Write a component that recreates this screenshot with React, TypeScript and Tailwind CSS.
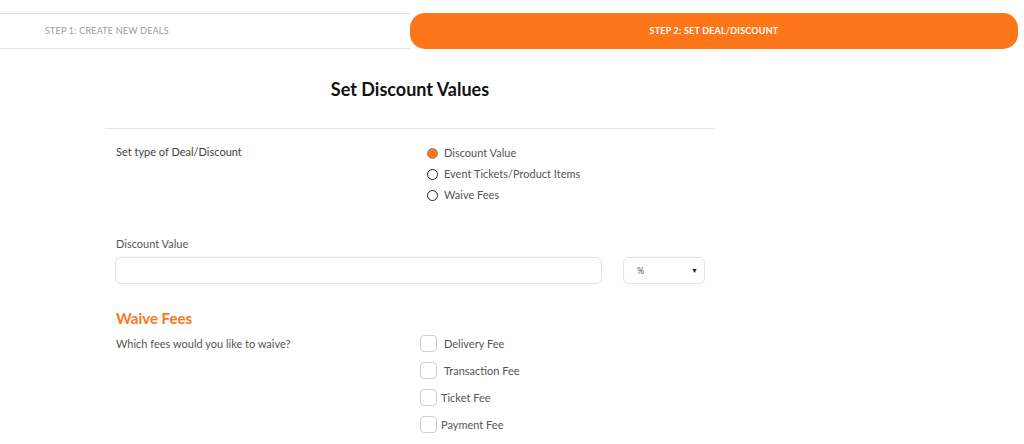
import React, { useState } from "react";

const dealTypes = ["Discount Value", "Event Tickets/Product Items", "Waive Fees"];

const fees = [
  { name: "Delivery Fee", gap: "ml-[7px]" },
  { name: "Transaction Fee", gap: "ml-[7px]" },
  { name: "Ticket Fee", gap: "ml-[4px]" },
  { name: "Payment Fee", gap: "ml-[4px]" },
];

export default function App() {
  const [type, setType] = useState("Discount Value");

  return (
    <div className="min-h-[444px] bg-white text-[#555] font-['Lato',sans-serif]">
      {/* Steps */}
      <div className="pt-[13px] flex items-stretch">
        <div className="w-[410px] h-[36px] border-y border-[#e3e3e3] flex items-center pl-[45px] text-[9px] tracking-[0.2px] text-[#9b9b9b]">
          STEP 1: CREATE NEW DEALS
        </div>
        <div className="w-[608px] h-[36px] rounded-[15px] bg-[#fd7619] flex items-center justify-center text-[9px] font-bold text-white tracking-[0.2px]">
          STEP 2: SET DEAL/DISCOUNT
        </div>
      </div>

      {/* Form */}
      <div className="w-[610px] ml-[105px]">
        <h1 className="text-center text-[18px] font-bold text-[#111] pt-[28px] leading-[24px]">Set Discount Values</h1>
        <div className="mt-[27px] border-t border-[#e6e6e6]" />

        <div className="px-[10px]">
          <div className="flex pt-[16px]">
            <div className="w-[312px] pl-[1px] text-[11px] leading-[14px] text-[#444]">Set type of Deal/Discount</div>
            <div className="flex flex-col gap-[7px] pt-[1px]">
              {dealTypes.map(t => (
                <label key={t} className="flex items-center gap-[6px] text-[11px] leading-[14px] text-[#555] cursor-pointer" onClick={() => setType(t)}>
                  {type === t ? (
                    <span className="w-[11px] h-[11px] rounded-full border border-[#8a8a8a] bg-[#fd7619]" />
                  ) : (
                    <span className="w-[11px] h-[11px] rounded-full border border-[#222] bg-white" />
                  )}
                  {t}
                </label>
              ))}
            </div>
          </div>

          <div className="pt-[35px] text-[11px] leading-[14px] text-[#555] pl-[1px]">Discount Value</div>
          <div className="flex gap-[21px] mt-[6px]">
            <input className="w-[487px] h-[27px] rounded-[6px] border border-[#e2e2e2] outline-none px-2 text-[10px]" />
            <div className="w-[82px] h-[27px] rounded-[6px] border border-[#e2e2e2] flex items-center justify-between pl-[13px] pr-[6px] text-[9px] text-[#555]">
              <span>%</span>
              <span className="text-[7px] text-[#222]">▼</span>
            </div>
          </div>

          <h2 className="pt-[24px] pl-[1px] text-[15px] font-bold leading-[20px] text-[#fd7619]">Waive Fees</h2>
          <div className="flex mt-[5px]">
            <div className="w-[305px] pl-[1px] pt-[4px] text-[11px] leading-[14px] text-[#555]">Which fees would you like to waive?</div>
            <div className="flex flex-col gap-[10px] pt-[2px]">
              {fees.map(f => (
                <label key={f.name} className="flex items-center text-[11px] text-[#555] leading-[14px]">
                  <span className="w-[17px] h-[17px] rounded-[4px] border border-[#cfcfcf] bg-white" />
                  <span className={f.gap}>{f.name}</span>
                </label>
              ))}
            </div>
          </div>
        </div>
      </div>
    </div>
  );
}
